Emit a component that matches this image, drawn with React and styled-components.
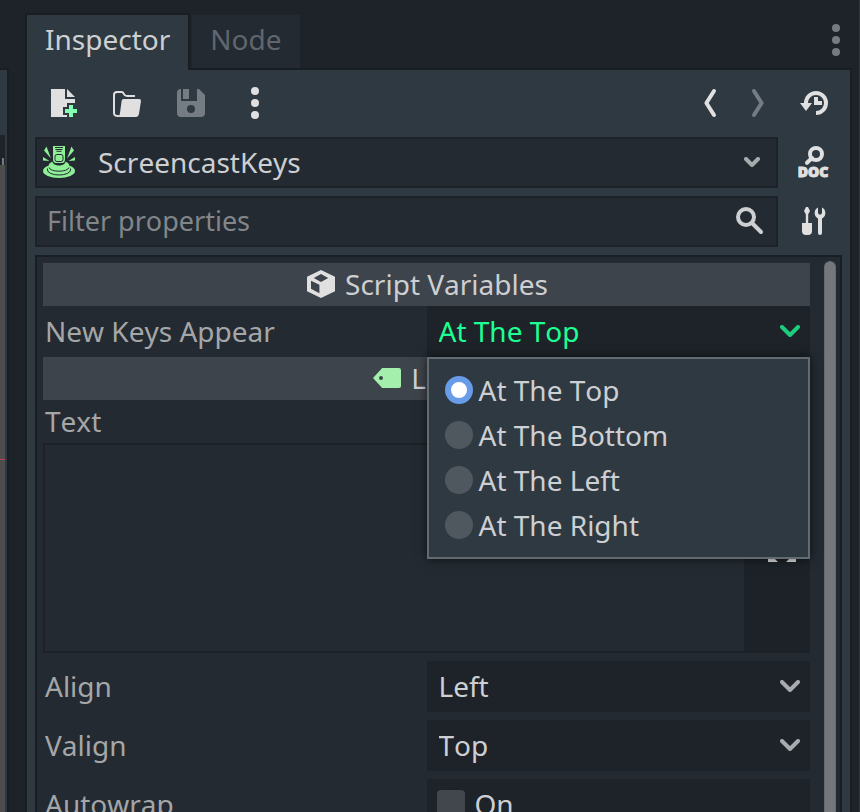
import React, { useState } from "react";
import styled, { createGlobalStyle, css } from "styled-components";

const color = {
  base: "#1d2329",
  panel: "#2f3942",
  field: "#232a31",
  edge: "#191e22",
  fieldEdge: "#1c2228",
  header: "#3e444b",
  text: "#cdcfd2",
  label: "#a5a6a8",
  muted: "#82868b",
  icon: "#e0e0e0",
  iconOff: "#757c83",
  accent: "#1dff95",
};

const GlobalStyle = createGlobalStyle`
  * { box-sizing: border-box; }
  html, body { margin: 0; background: ${color.base}; }
  body, button, input, select, textarea {
    font-family: "Noto Sans", sans-serif;
    font-size: 28px;
    line-height: 38px;
    font-kerning: none;
    color: ${color.text};
  }
`;

const Screen = styled.div`
  display: flex;
  height: 100vh;
  overflow: hidden;
  background: ${color.base};
  border-right: 1px solid #30363b;
`;

const Neighbour = styled.div`
  display: flex;
  flex-direction: column;
  flex: none;
  width: 9px;
  margin: 68px 16px 0 0;
  border: 2px solid ${color.edge};
  border-width: 2px 2px 0 0;
  padding: 65px 2px 0 0;
  background: ${color.panel};
`;

const NeighbourBar = styled.div`
  flex: none;
  display: flex;
  align-items: flex-end;
  justify-content: flex-end;
  height: 30px;
  padding-right: 1px;
  background: ${color.base};
`;

const RulerTick = styled.span`
  width: 2px;
  height: 7px;
  background: #777b7f;
`;

const Viewport = styled.div`
  flex: 1;
  padding-top: 294px;
  background: #4d4d4d;
`;

const GuideLine = styled.div`
  height: 1px;
  background: #b8405f;
`;

const Dock = styled.main`
  flex: 1;
  min-width: 0;
  display: flex;
  flex-direction: column;
  padding: 13px 7px 0 0;
`;

const TabBar = styled.div`
  display: flex;
  align-items: flex-end;
  flex: none;
`;

const Tab = styled.button`
  border: 0;
  height: 53px;
  padding: 0 18px 5px;
  margin-left: 2px;
  background: ${color.field};
  color: #60666d;
  ${(p) =>
    p.$active &&
    css`
      position: relative;
      height: 57px;
      margin: 0 0 -2px;
      padding: 0 18px 7px;
      border: 2px solid ${color.edge};
      border-bottom: 0;
      background: ${color.panel};
      color: ${color.text};
    `}
`;

const DockMenu = styled.button`
  display: flex;
  margin-left: auto;
  align-self: center;
  padding: 0 0 2px;
  border: 0;
  background: none;
`;

const Panel = styled.section`
  flex: 1;
  min-height: 0;
  display: flex;
  flex-direction: column;
  gap: 8px;
  padding: 8px 8px 0;
  border: 2px solid ${color.edge};
  border-bottom: 0;
  background: ${color.panel};
`;

const Row = styled.div`
  display: flex;
  flex: none;
  gap: 8px;
  height: 51px;
`;

const ToolButton = styled.button`
  display: flex;
  align-items: center;
  justify-content: center;
  flex: none;
  width: ${(p) => (p.$narrow ? 40 : 56)}px;
  padding: 0 0 1px;
  border: 0;
  background: none;
`;

const Spacer = styled.div`
  flex: 1;
`;

const fieldBox = css`
  flex: 1;
  min-width: 0;
  display: flex;
  align-items: center;
  border: 2px solid ${color.fieldEdge};
  background: ${color.field};
`;

const ObjectPicker = styled.button`
  ${fieldBox}
  gap: 23px;
  padding: 0 16px 1px 6px;
  text-align: left;
`;

const ObjectName = styled.span`
  flex: 1;
`;

const SearchField = styled.label`
  ${fieldBox}
  padding: 0 12px 2px 10px;
`;

const SearchInput = styled.input`
  flex: 1;
  min-width: 0;
  padding: 0;
  border: 0;
  outline: 0;
  background: none;
  font-size: 27px;
  &::placeholder {
    color: ${color.muted};
    opacity: 1;
  }
`;

const Tree = styled.div`
  flex: 1;
  min-height: 0;
  display: flex;
  gap: 14px;
  padding: 4px 4px 0 6px;
  border: 2px solid ${color.edge};
  border-bottom: 0;
  background: ${color.field};
`;

const Properties = styled.div`
  flex: 1;
  min-width: 0;
  padding-top: 2px;
`;

const ScrollThumb = styled.div`
  flex: none;
  width: 12px;
  border: 1px solid #666b70;
  border-bottom: 0;
  border-radius: 6px 6px 0 0;
  background: #74787c;
`;

const SectionHeader = styled.h2`
  display: flex;
  align-items: center;
  justify-content: center;
  gap: 8px;
  height: 43px;
  margin: 0;
  padding-bottom: 1px;
  background: ${color.header};
  font-size: 28px;
  font-weight: 400;
`;

const Property = styled.div`
  display: grid;
  grid-template-columns: 1fr 1fr;
  align-items: center;
  height: 51px;
  margin-top: ${(p) => (p.$spaced ? 8 : 0)}px;
`;

const PropertyLabel = styled.label`
  padding: 0 0 2px 2px;
  color: ${color.label};
`;

const BlockLabel = styled(PropertyLabel)`
  display: block;
  height: 43px;
  padding-top: 2px;
`;

const ValueBox = styled.div`
  position: relative;
  display: flex;
  align-items: center;
  height: 51px;
  background: ${color.base};
`;

const Select = styled.select`
  appearance: none;
  flex: 1;
  height: 51px;
  padding: 0 40px 2px 12px;
  border: 0;
  outline: 0;
  background: none;
  color: ${(p) => (p.$open ? color.accent : color.text)};
`;

const SelectArrow = styled.span`
  position: absolute;
  right: 10px;
  display: flex;
  padding-bottom: 2px;
  pointer-events: none;
`;

const Popup = styled.div`
  position: absolute;
  z-index: 2;
  top: 100%;
  left: 0;
  right: 0;
  padding: 9px 16px;
  border: 2px solid #636b72;
  background: ${color.panel};
  box-shadow: 0 0 10px rgba(0, 0, 0, 0.6);
`;

const Choice = styled.label`
  display: flex;
  align-items: center;
  gap: 6px;
  height: 45px;
  padding-bottom: 1px;
`;

const Radio = styled.input`
  appearance: none;
  flex: none;
  width: 28px;
  height: 28px;
  margin: 0;
  border-radius: 50%;
  background: #4f585f;
  &:checked {
    border: 6px solid #699ce8;
    background: #fff;
  }
`;

const TextBlock = styled.div`
  display: flex;
  gap: 10px;
  height: 210px;
  background: ${color.fieldEdge};
`;

const TextArea = styled.textarea`
  flex: 1;
  min-width: 0;
  margin: 2px 0 2px 2px;
  padding: 8px;
  border: 0;
  outline: 0;
  resize: none;
  background: ${color.field};
`;

const CheckLabel = styled.label`
  display: flex;
  align-items: center;
  gap: 10px;
  padding: 0 0 1px 10px;
`;

const Checkbox = styled.input`
  appearance: none;
  width: 28px;
  height: 28px;
  margin: 0;
  border-radius: 4px;
  background: #42464d;
`;

const Svg = styled.svg`
  display: block;
  flex: none;
`;

function Icon({ children, fill = color.icon, narrow }) {
  return (
    <Svg width={narrow ? 16 : 32} height="32" viewBox={narrow ? "0 0 8 16" : "0 0 16 16"} fill={fill} aria-hidden="true">
      {children}
    </Svg>
  );
}

const NewIcon = () => (
  <Icon>
    <path d="m2 1v14h8v-1h-2v-4h2v-2h4v-2h-5v-5zm8 0v4h4z" />
    <path d="m11 9v2h-2v2h2v2h2v-2h2v-2h-2v-2z" fill="#84ffb1" />
  </Icon>
);

const FolderIcon = () => (
  <Icon>
    <path
      d="M3.6 14.5C2 14.5 1.5 14 1.5 13V4Q1.5 2.5 3 2.5H5.2Q6 2.5 6.4 3.4Q6.9 4.5 8 4.5H11.6"
      fill="none"
      stroke={color.icon}
      strokeLinecap="round"
    />
    <path d="M6.3 6H14q1.1 0 1 1l-1 6.4q-.3 1.6-1.6 1.6H3q1.3-.3 1.5-2l.8-6q.1-1 1-1z" />
  </Icon>
);

const SaveIcon = () => (
  <Icon fill={color.iconOff}>
    <path
      fillRule="evenodd"
      d="M3 1v6h8V1h1l3 3v9q0 2-2 2H3q-2 0-2-2V3q0-2 2-2zM8 9a2 2 0 1 0 0 4 2 2 0 0 0 0-4z"
    />
    <path d="M4 1h3v5H4z" />
  </Icon>
);

const DotsIcon = ({ fill }) => (
  <Icon fill={fill}>
    <circle cx="8" cy="2" r="2" />
    <circle cx="8" cy="8" r="2" />
    <circle cx="8" cy="14" r="2" />
  </Icon>
);

const StepIcon = ({ d, stroke }) => (
  <Icon narrow fill="none">
    <path d={d} stroke={stroke} strokeWidth="2" strokeLinecap="round" strokeLinejoin="round" />
  </Icon>
);

const HistoryIcon = () => (
  <Icon>
    <path d="m9 2a6 6 0 0 0-6 6h-2l3 4 3-4h-2a4 4 0 0 1 4-4 4 4 0 0 1 4 4 4 4 0 0 1-4 4v2a6 6 0 0 0 6-6 6 6 0 0 0-6-6zm-1 3v4h4v-2h-2v-2z" />
  </Icon>
);

const DocText = styled.text`
  font-family: "Noto Sans", sans-serif;
  font-size: 7px;
  font-weight: 900;
`;

const DocIcon = () => (
  <Icon>
    <circle cx="9" cy="4" r="3" fill="none" stroke={color.icon} strokeWidth="2" />
    <path d="M7 6 4.5 8.4" stroke={color.icon} strokeWidth="2" strokeLinecap="round" />
    <DocText x="7.5" y="15.5" textAnchor="middle" stroke={color.icon} strokeWidth="0.5">DOC</DocText>
  </Icon>
);

const ToolsIcon = () => (
  <Icon>
    <path d="M4 1h1l1 2-.9 1.6V9H7v4q0 2-2 2H4q-2 0-2-2V9h1.9V4.6L3 3z" />
    <path d="M10 1.2A3.1 3.1 0 0 0 10 6.7V14a1 1 0 0 0 2 0V6.7a3.1 3.1 0 0 0 0-5.5V4l-.5.8h-1L10 4z" />
  </Icon>
);

const CubeIcon = () => (
  <Icon>
    <path
      fillRule="evenodd"
      d="M8 1 1 4.4v7.2L8 15l7-3.4V4.4zM8 3l3.6 2L8 7 4.4 5zM3 6.4l4.2 2v4.2L3 10.4z"
    />
  </Icon>
);

const TagIcon = () => (
  <Icon fill="#a5efac">
    <path
      fillRule="evenodd"
      d="M5.6 3 1 8l4.6 5H14q1 0 1-1V4q0-1-1-1zM5 7a1 1 0 1 1 0 2 1 1 0 0 1 0-2z"
    />
  </Icon>
);

const KeysIcon = () => (
  <Svg width="32" height="32" viewBox="0 0 32 32" fill="#8eef97" aria-hidden="true">
    <ellipse cx="16" cy="25" rx="16" ry="7" />
    <path d="M4.5 22.5v1.5a11.5 5 0 0 0 23 0v-1.5" fill="none" stroke={color.field} />
    <ellipse cx="16" cy="20" rx="10.5" ry="5.5" />
    <path d="M6 21.5a10.2 4.6 0 0 0 20 0" fill="none" stroke={color.field} />
    <path d="M9.4 15c0 6 13.2 6 13.2 0V0H9.4z" fill={color.field} />
    <path d="M10 0h12v13q0 4-3 4h-6q-3 0-3-4z" />
    <path d="M12 1.5h8M12.5 3.5h7M13.5 5.3h5" stroke={color.field} />
    <rect x="12" y="8.5" width="8" height="7" rx="2" fill="none" stroke={color.field} />
    <path d="M3.5 0.5 1 4.5l7 8zM28.5 .5 31 4.5l-7 8zM0 11v3.5l6.5.5zM32 11v3.5l-6.5.5z" />
  </Svg>
);

const ArrowIcon = ({ stroke = "#a7abae", small }) =>
  small ? (
    <Svg width="16" height="10" viewBox="0 0 16 10" fill="none" aria-hidden="true">
      <path d="m2 2 6 6 6-6" stroke={stroke} strokeWidth="4" strokeLinecap="round" strokeLinejoin="round" />
    </Svg>
  ) : (
    <Svg width="20" height="12" viewBox="0 0 20 12" fill="none" aria-hidden="true">
      <path d="m2 2 8 8 8-8" stroke={stroke} strokeWidth="4" strokeLinecap="round" strokeLinejoin="round" />
    </Svg>
  );

const SearchIcon = () => (
  <Svg width="28" height="28" viewBox="0 0 28 28" fill="none" stroke={color.text} strokeWidth="4" aria-hidden="true">
    <circle cx="10" cy="10" r="8" />
    <path d="m16 16 9 9" strokeLinecap="round" />
  </Svg>
);

const ExpandIcon = () => (
  <Icon>
    <path d="M1 1h5L1 6zM15 1v5l-5-5zM1 15v-5l5 5zM15 15h-5l5-5z" />
    <path d="m3 3 3 3M13 3l-3 3M3 13l3-3M13 13l-3-3" stroke={color.icon} strokeWidth="2" />
  </Icon>
);

const positions = ["At The Top", "At The Bottom", "At The Left", "At The Right"];

function SelectProperty({ id, label, options, value, onChange, spaced, open, children }) {
  return (
    <Property $spaced={spaced}>
      <PropertyLabel htmlFor={id}>{label}</PropertyLabel>
      <ValueBox>
        <Select id={id} $open={open} value={value} onChange={(e) => onChange(e.target.value)}>
          {options.map((o) => (
            <option key={o}>{o}</option>
          ))}
        </Select>
        <SelectArrow>
          <ArrowIcon stroke={open ? "#1dcc7d" : undefined} />
        </SelectArrow>
        {children}
      </ValueBox>
    </Property>
  );
}

export default function App() {
  const [position, setPosition] = useState(positions[0]);
  const [align, setAlign] = useState("Left");
  const [valign, setValign] = useState("Top");

  return (
    <>
      <GlobalStyle />
      <Screen>
        <Neighbour>
          <NeighbourBar>
            <RulerTick />
          </NeighbourBar>
          <Viewport>
            <GuideLine />
          </Viewport>
        </Neighbour>
        <Dock>
          <TabBar role="tablist">
            <Tab $active role="tab" aria-selected="true">Inspector</Tab>
            <Tab role="tab" aria-selected="false">Node</Tab>
            <DockMenu aria-label="Dock options">
              <DotsIcon fill="#777b7f" />
            </DockMenu>
          </TabBar>
          <Panel>
            <Row>
              <ToolButton aria-label="New resource"><NewIcon /></ToolButton>
              <ToolButton aria-label="Load resource"><FolderIcon /></ToolButton>
              <ToolButton aria-label="Save resource" disabled><SaveIcon /></ToolButton>
              <ToolButton aria-label="Resource options"><DotsIcon /></ToolButton>
              <Spacer />
              <ToolButton $narrow aria-label="Previous object">
                <StepIcon d="M6 2 2.2 8 6 14" stroke={color.icon} />
              </ToolButton>
              <ToolButton $narrow aria-label="Next object" disabled>
                <StepIcon d="M2 2 5.8 8 2 14" stroke={color.iconOff} />
              </ToolButton>
              <ToolButton aria-label="History"><HistoryIcon /></ToolButton>
            </Row>
            <Row>
              <ObjectPicker aria-haspopup="listbox">
                <KeysIcon />
                <ObjectName>ScreencastKeys</ObjectName>
                <ArrowIcon small />
              </ObjectPicker>
              <ToolButton aria-label="Open documentation"><DocIcon /></ToolButton>
            </Row>
            <Row>
              <SearchField>
                <SearchInput aria-label="Filter properties" placeholder="Filter properties" />
                <SearchIcon />
              </SearchField>
              <ToolButton aria-label="Object tools"><ToolsIcon /></ToolButton>
            </Row>
            <Tree>
              <Properties>
                <SectionHeader><CubeIcon />Script Variables</SectionHeader>
                <SelectProperty
                  id="position"
                  label="New Keys Appear"
                  options={positions}
                  value={position}
                  onChange={setPosition}
                  open
                >
                  <Popup role="radiogroup" aria-label="New Keys Appear">
                    {positions.map((p) => (
                      <Choice key={p}>
                        <Radio type="radio" name="position" checked={p === position} onChange={() => setPosition(p)} />
                        {p}
                      </Choice>
                    ))}
                  </Popup>
                </SelectProperty>
                <SectionHeader><TagIcon />Label</SectionHeader>
                <BlockLabel htmlFor="text">Text</BlockLabel>
                <TextBlock>
                  <TextArea id="text" />
                  <ToolButton aria-label="Expand text editor"><ExpandIcon /></ToolButton>
                </TextBlock>
                <SelectProperty
                  id="align"
                  label="Align"
                  options={["Left", "Center", "Right", "Fill"]}
                  value={align}
                  onChange={setAlign}
                  spaced
                />
                <SelectProperty
                  id="valign"
                  label="Valign"
                  options={["Top", "Center", "Bottom", "Fill"]}
                  value={valign}
                  onChange={setValign}
                  spaced
                />
                <Property $spaced>
                  <PropertyLabel htmlFor="autowrap">Autowrap</PropertyLabel>
                  <ValueBox>
                    <CheckLabel>
                      <Checkbox id="autowrap" type="checkbox" />
                      On
                    </CheckLabel>
                  </ValueBox>
                </Property>
              </Properties>
              <ScrollThumb />
            </Tree>
          </Panel>
        </Dock>
      </Screen>
    </>
  );
}
